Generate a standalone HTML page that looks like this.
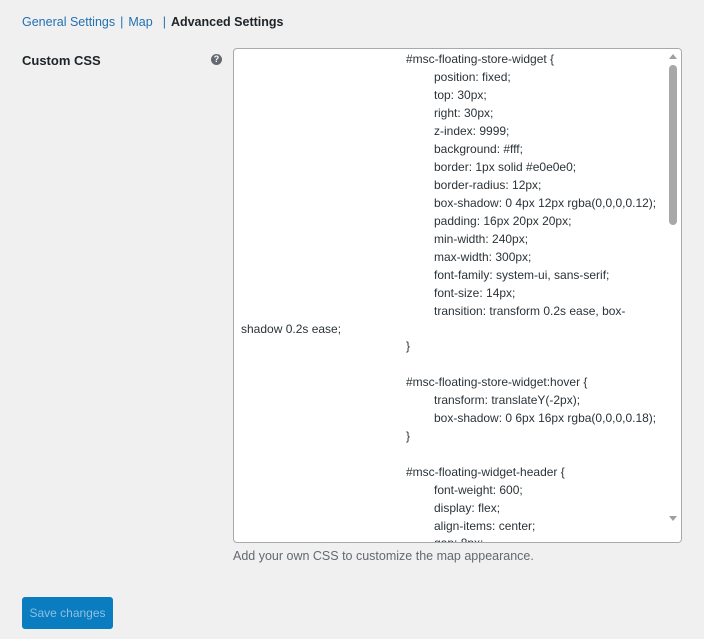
<!DOCTYPE html>
<html><head><meta charset="utf-8"><style>
body{margin:0;background:#f0f0f1;width:704px;height:639px;overflow:hidden;font-family:"Liberation Sans",sans-serif;font-size:13px;color:#3c434a;position:relative}
.nav{position:absolute;left:22px;top:15px;font-size:12.5px}
.nav a{color:#2271b1;text-decoration:none}
.nav .sep{color:#2271b1;margin:0 5px}
.nav b{color:#1d2327;font-weight:600}
.lbl{position:absolute;left:22px;top:53px;font-weight:600;color:#1d2327;font-size:13px}
.help{position:absolute;left:211px;top:54px;width:11px;height:11px;border-radius:50%;background:#646970;color:#fff;font-size:9px;line-height:11px;text-align:center;font-weight:bold}
.ta{position:absolute;left:233px;top:48px;width:447px;height:493px;background:#fff;border:1px solid #a7aaad;border-radius:4px;overflow:hidden}
.l{position:absolute;white-space:pre;line-height:18px;color:#2c3338;font-size:12px}
.sb{position:absolute;right:0;top:0;width:15px;height:493px;background:#fff}
.thumb{position:absolute;left:3px;top:16px;width:8px;height:160px;background:#a8a8a8;border-radius:4px}
.desc{position:absolute;left:233px;top:549px;color:#646970;font-size:12.5px}
.btn{position:absolute;left:22px;top:597px;width:91px;height:32px;border-radius:3px;color:#8fbfe3;font-size:12px;line-height:32px;text-align:center;background:#0a7cc0}
</style></head><body>
<div class="nav"><a>General Settings</a><span class="sep">|</span><a>Map</a><span class="sep" style="margin-left:10px">|</span><b>Advanced Settings</b></div>
<div class="lbl">Custom CSS</div>
<div class="help">?</div>
<div class="ta">
<div class="l" style="left:172px;top:1px">#msc-floating-store-widget {</div>
<div class="l" style="left:200px;top:19px">position: fixed;</div>
<div class="l" style="left:200px;top:37px">top: 30px;</div>
<div class="l" style="left:200px;top:55px">right: 30px;</div>
<div class="l" style="left:200px;top:73px">z-index: 9999;</div>
<div class="l" style="left:200px;top:91px">background: #fff;</div>
<div class="l" style="left:200px;top:109px">border: 1px solid #e0e0e0;</div>
<div class="l" style="left:200px;top:127px">border-radius: 12px;</div>
<div class="l" style="left:200px;top:145px">box-shadow: 0 4px 12px rgba(0,0,0,0.12);</div>
<div class="l" style="left:200px;top:163px">padding: 16px 20px 20px;</div>
<div class="l" style="left:200px;top:181px">min-width: 240px;</div>
<div class="l" style="left:200px;top:199px">max-width: 300px;</div>
<div class="l" style="left:200px;top:217px">font-family: system-ui, sans-serif;</div>
<div class="l" style="left:200px;top:235px">font-size: 14px;</div>
<div class="l" style="left:200px;top:253px">transition: transform 0.2s ease, box-</div>
<div class="l" style="left:7px;top:271px">shadow 0.2s ease;</div>
<div class="l" style="left:172px;top:288px">}</div>
<div class="l" style="left:172px;top:324px">#msc-floating-store-widget:hover {</div>
<div class="l" style="left:200px;top:342px">transform: translateY(-2px);</div>
<div class="l" style="left:200px;top:360px">box-shadow: 0 6px 16px rgba(0,0,0,0.18);</div>
<div class="l" style="left:172px;top:378px">}</div>
<div class="l" style="left:172px;top:414px">#msc-floating-widget-header {</div>
<div class="l" style="left:200px;top:432px">font-weight: 600;</div>
<div class="l" style="left:200px;top:450px">display: flex;</div>
<div class="l" style="left:200px;top:468px">align-items: center;</div>
<div class="l" style="left:200px;top:485px">gap: 8px;</div>
<div class="sb"><div style="position:absolute;left:3px;top:5px;width:0;height:0;border-left:4px solid transparent;border-right:4px solid transparent;border-bottom:5px solid #a0a0a0"></div><div class="thumb"></div><div style="position:absolute;left:3px;top:467px;width:0;height:0;border-left:4px solid transparent;border-right:4px solid transparent;border-top:5px solid #a0a0a0"></div></div>
</div>
<div class="desc">Add your own CSS to customize the map appearance.</div>
<div class="btn">Save changes</div>
</body></html>
